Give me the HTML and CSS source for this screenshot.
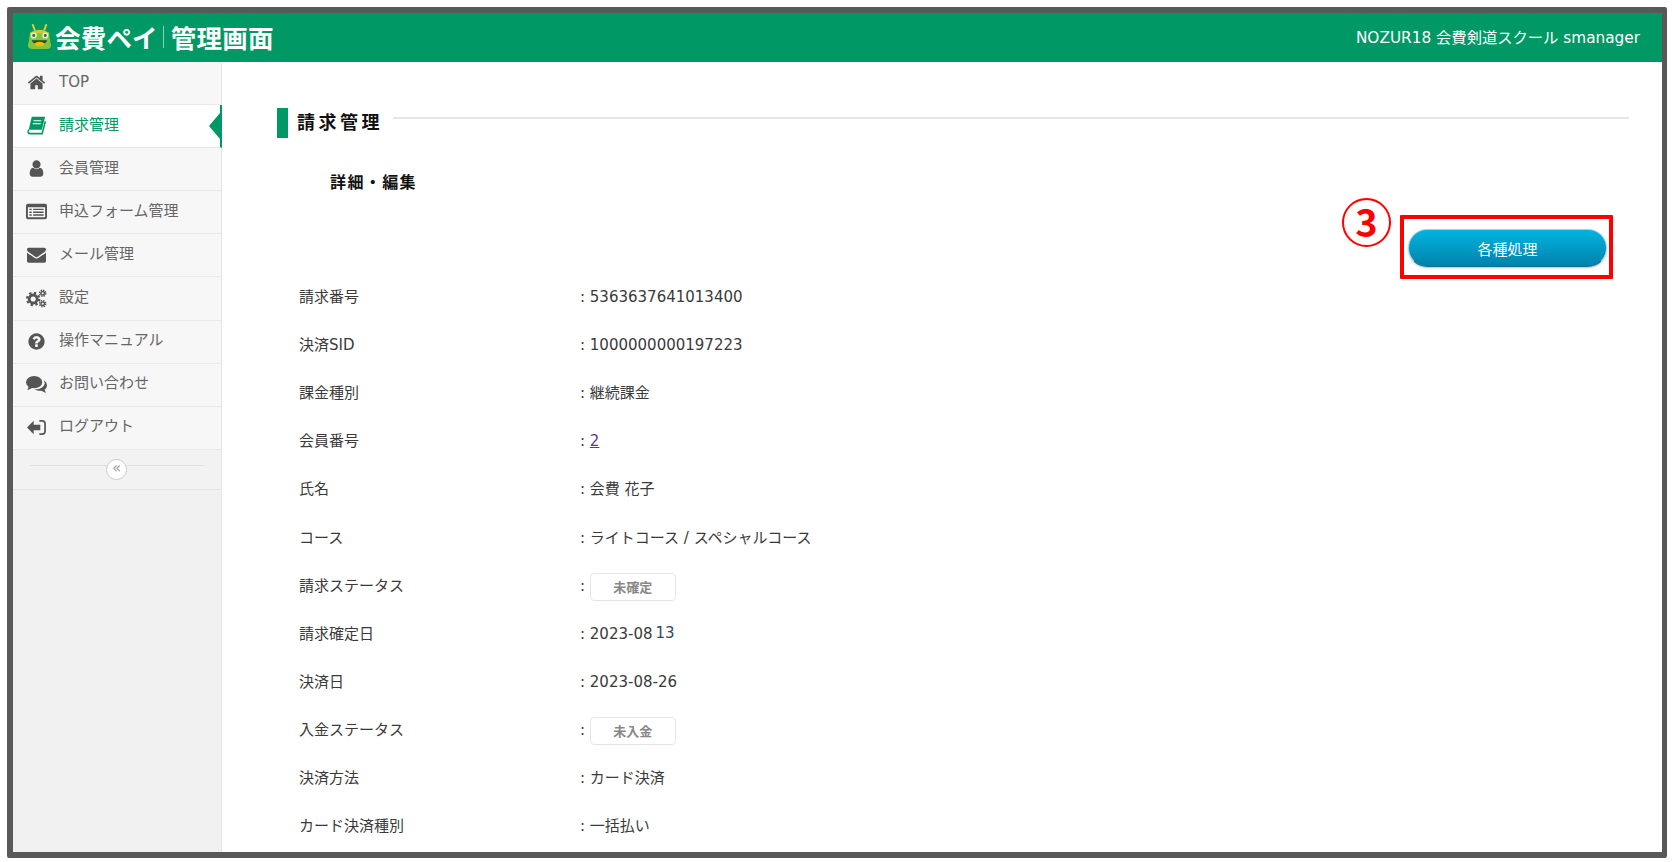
FILE: index.html
```html
<!DOCTYPE html>
<html lang="ja">
<head>
<meta charset="utf-8">
<title>請求管理</title>
<link rel="stylesheet" href="styles.css">
</head>
<body>
<div class="frame">
  <header class="topbar">
    <div class="brand">
      <svg class="frog" viewBox="0 0 26 28" aria-hidden="true">
        <path d="M8 7 6 2M18 7l2-5" stroke="#e8c92e" stroke-width="2" stroke-linecap="round" fill="none"/>
        <path d="M3 10q10-6 20 0v3H3z" fill="#d9c62c"/>
        <path d="M3 12q10-3 20 0l2 11q0 4-5 4H6q-5 0-5-4z" fill="#7ec63e"/>
        <circle cx="7" cy="13" r="3.200" fill="#dff2d0"/><circle cx="19" cy="13" r="3.200" fill="#dff2d0"/>
        <circle cx="7" cy="13" r="1.500" fill="#2b6b3c"/><circle cx="19" cy="13" r="1.500" fill="#2b6b3c"/>
        <path d="M5 18h16q-1 4-8 4t-8-4z" fill="#2a4a2c"/>
        <path d="M8 21q5-3 10 0l-1 3H9z" fill="#f5b800"/>
      </svg>
      <span class="brand-name">会費ペイ</span>
      <span class="brand-sep"></span>
      <span class="brand-name">管理画面</span>
    </div>
    <div class="account">NOZUR18 会費剣道スクール smanager</div>
  </header>
  <div class="body">
    <nav class="side">
      <a class="item"><svg class="ico" viewBox="0 0 1792 1792"><path d="M1472 992v480q0 26-19 45t-45 19h-384v-384h-256v384h-384q-26 0-45-19t-19-45v-480q0-1 .5-3t.5-3l575-474 575 474q1 2 1 6zm223-69l-62 74q-8 9-21 11h-3q-13 0-21-7l-692-577-692 577q-12 8-24 7-13-2-21-11l-62-74q-8-10-7-23.500t11-21.500l719-599q32-26 76-26t76 26l244 204v-195q0-14 9-23t23-9h192q14 0 23 9t9 23v408l219 182q10 8 11 21.500t-7 23.500z"/></svg><span>TOP</span></a>
      <a class="item active"><svg class="ico" viewBox="0 0 22 22"><path d="M5.500 1h15.500l-3.800 15H2z"/><path d="M2.200 16q-1.800 2-.8 3.400.6 1 2.300 1H17.500l3.800-14.400" fill="none" stroke="currentColor" stroke-width="1.800"/><path d="M7.500 5.500h9M6.800 8.800h9" stroke="#fff" stroke-width="1.300"/></svg><span>請求管理</span></a>
      <a class="item"><svg class="ico" viewBox="0 0 1792 1792"><path d="M1536 1399q0 109-62.500 187t-150.500 78h-854q-88 0-150.500-78t-62.500-187q0-85 8.500-160.500t31.500-152 58.500-131 94-89 134.500-34.500q131 128 313 128t313-128q76 0 134.500 34.500t94 89 58.500 131 31.500 152 8.500 160.500zm-256-887q0 159-112.500 271.500t-271.500 112.500-271.500-112.500-112.500-271.500 112.500-271.500 271.500-112.500 271.500 112.500 112.500 271.500z"/></svg><span>会員管理</span></a>
      <a class="item"><svg class="ico" viewBox="0 0 22 18"><path fill-rule="evenodd" d="M2 1h18a2 2 0 0 1 2 2v12a2 2 0 0 1-2 2H2a2 2 0 0 1-2-2V3a2 2 0 0 1 2-2zm0 3.500V15h18V4.500z"/><path d="M3.500 6h2.500v1.500H3.500zM7.500 6h11v1.500h-11zM3.500 9h2.500v1.500H3.500zM7.500 9h11v1.500h-11zM3.500 12h2.500v1.500H3.500zM7.500 12h11v1.500h-11z"/></svg><span>申込フォーム管理</span></a>
      <a class="item"><svg class="ico" viewBox="0 0 1792 1792"><path d="M1792 710v794q0 66-47 113t-113 47h-1472q-66 0-113-47t-47-113v-794q44 49 101 87 362 246 497 345 57 42 92.500 65.500t94.500 48 110 24.500h2q51 0 110-24.500t94.500-48 92.500-65.500q170-123 498-345 57-39 100-87zm0-294q0 79-49 151t-122 123q-376 261-468 325-10 7-42.500 30.500t-54 38-52 32.500-57.500 27-50 9h-2q-23 0-50-9t-57.500-27-52-32.500-54-38-42.500-30.500q-91-64-262-182.500t-205-142.500q-62-42-117-115.500t-55-136.500q0-78 41.500-130t118.500-52h1472q65 0 112.500 47t47.500 113z"/></svg><span>メール管理</span></a>
      <a class="item"><svg class="ico" viewBox="0 0 22 20"><g fill="none" stroke="currentColor"><circle cx="7.500" cy="10.500" r="4.200" stroke-width="3"/><circle cx="7.500" cy="10.500" r="6.400" stroke-width="2.400" stroke-dasharray="2.500 2.520"/><circle cx="17.500" cy="4.500" r="1.900" stroke-width="1.500"/><circle cx="17.500" cy="4.500" r="3.300" stroke-width="1.400" stroke-dasharray="1.500 1.090"/><circle cx="17.500" cy="15.500" r="1.900" stroke-width="1.500"/><circle cx="17.500" cy="15.500" r="3.300" stroke-width="1.400" stroke-dasharray="1.500 1.090"/></g></svg><span>設定</span></a>
      <a class="item"><svg class="ico" viewBox="0 0 1792 1792"><path d="M1024 1376v-192q0-14-9-23t-23-9h-192q-14 0-23 9t-9 23v192q0 14 9 23t23 9h192q14 0 23-9t9-23zm256-672q0-88-55.500-163t-138.500-116-170-41q-243 0-371 213-15 24 8 42l132 100q7 6 19 6 16 0 25-12 53-68 86-92 34-24 86-24 48 0 85.500 26t37.500 59q0 38-20 61t-68 45q-63 28-115.500 86.500t-52.500 125.500v36q0 14 9 23t23 9h192q14 0 23-9t9-23q0-19 21.500-49.500t54.500-49.500q32-18 49-28.500t46-35 44.500-48 28-60.500 12.500-81zm384 192q0 209-103 385.500t-279.500 279.500-385.500 103-385.500-103-279.500-279.500-103-385.500 103-385.500 279.500-279.500 385.500-103 385.500 103 279.500 279.500 103 385.500z"/></svg><span>操作マニュアル</span></a>
      <a class="item"><svg class="ico" viewBox="0 0 22 20"><ellipse cx="8.500" cy="7.500" rx="8.500" ry="6.500"/><path d="M3 11 1.500 16 8 13z"/><path d="M18.500 5.500q3.500 2 3.500 5.500 0 3-2.500 4.500l1.500 3.500-5-2.500q-4 .5-7-1.500 6 0 9-3t.5-6.500z"/></svg><span>お問い合わせ</span></a>
      <a class="item"><svg class="ico" viewBox="0 0 22 20"><path d="M1 10l7-7v4h7v6H8v4z"/><path d="M14 3h3a3 3 0 0 1 3 3v8a3 3 0 0 1-3 3h-3" fill="none" stroke="currentColor" stroke-width="1.800"/></svg><span>ログアウト</span></a>
      <div class="collapse">
        <span class="collapse-line"></span>
        <span class="collapse-btn">«</span>
      </div>
    </nav>
    <main class="main">
      <div class="title-row">
        <span class="title-mark"></span>
        <h1 class="title">請求管理</h1>
        <span class="title-rule"></span>
      </div>
      <h2 class="sub">詳細・編集</h2>
      <div class="actions"><button class="btn">各種処理</button></div>
      <dl class="rows">
        <div class="row"><dt>請求番号</dt><dd>: 5363637641013400</dd></div>
        <div class="row"><dt>決済SID</dt><dd>: 1000000000197223</dd></div>
        <div class="row"><dt>課金種別</dt><dd>: 継続課金</dd></div>
        <div class="row"><dt>会員番号</dt><dd>: <a class="link">2</a></dd></div>
        <div class="row"><dt>氏名</dt><dd>: 会費 花子</dd></div>
        <div class="row"><dt>コース</dt><dd>: ライトコース / スペシャルコース</dd></div>
        <div class="row"><dt>請求ステータス</dt><dd>: <span class="badge">未確定</span></dd></div>
        <div class="row"><dt>請求確定日</dt><dd>: 2023-08<span class="patch">13</span></dd></div>
        <div class="row"><dt>決済日</dt><dd>: 2023-08-26</dd></div>
        <div class="row"><dt>入金ステータス</dt><dd>: <span class="badge">未入金</span></dd></div>
        <div class="row"><dt>決済方法</dt><dd>: カード決済</dd></div>
        <div class="row"><dt>カード決済種別</dt><dd>: 一括払い</dd></div>
      </dl>
    </main>
  </div>
  <div class="mark-box"></div>
  <div class="mark-num">3</div>
</div>
</body>
</html>
```
FILE: styles.css
```css
* { box-sizing: border-box; }
html, body { margin: 0; height: 100%; overflow: hidden; background: #fff; }
body {
  font-family: "DejaVu Sans", "Noto Sans CJK JP", sans-serif;
  font-size: 15px;
  color: #3a3a3a;
}
.frame {
  position: relative;
  margin: 7px 0 0 7px;
  width: 1660px;
  height: 851px;
  border: solid #595959;
  border-width: 6px 5px 6px 6px;
  border-radius: 2px;
  overflow: hidden;
  display: flex;
  flex-direction: column;
}
.topbar {
  height: 49px;
  flex: none;
  background: #009966;
  color: #fff;
  display: flex;
  align-items: center;
  justify-content: space-between;
  padding: 0 22px 0 14px;
}
.brand { display: flex; align-items: center; margin-bottom: 2px; }
.frog { width: 25px; height: 27px; margin-right: 3px; }
.brand-name {
  font-family: "Noto Sans CJK JP", sans-serif;
  font-size: 25.500px;
  font-weight: 700;
  letter-spacing: .2px;
  line-height: 30px;
}
.brand-sep { width: 1px; height: 22px; background: #8fd0b6; margin: 0 7px 0 5px; }
.account { font-size: 15.300px; line-height: 22px; }
.body { flex: 1; display: flex; min-height: 0; }
.side {
  position: relative;
  width: 209px;
  flex: none;
  background: #f0f0f0;
  border-right: 1px solid #e6e6e6;
}
.item {
  position: relative;
  height: 43.100px;
  display: flex;
  align-items: center;
  padding-left: 13px;
  background: #f7f7f7;
  border-bottom: 1px solid #e9e9e9;
  color: #666;
  line-height: 20px;
}
.item span { margin: 0 0 3px 12px; }
.ico { width: 21px; height: 19px; fill: currentColor; flex: none; color: #555; margin-bottom: 1px; }
.item.active { background: #fff; color: #009966; margin-right: -1px; border-right: 2px solid #009966; }
.item.active .ico { color: #009966; }
.item.active::after {
  content: "";
  position: absolute;
  right: 0;
  top: 8px;
  border: solid transparent;
  border-width: 13px 11px 13px 0;
  border-right-color: #009966;
}
.collapse {
  position: relative;
  height: 40px;
  background: #f2f2f2;
  border-bottom: 1px solid #e3e3e3;
  padding: 15px 17px 0;
}
.collapse-line { display: block; height: 1px; background: #e0e0e0; }
.collapse-btn {
  position: absolute;
  left: 93px;
  top: 9px;
  width: 21px;
  height: 21px;
  border: 1px solid #ccc;
  border-radius: 50%;
  background: #fff;
  color: #999;
  font-size: 15px;
  line-height: 16px;
  text-align: center;
}
.main { flex: 1; padding: 46px 33px 0 55px; min-width: 0; overflow: hidden; }
.title-row { display: flex; align-items: flex-start; height: 30px; }
.title-mark { width: 11px; height: 30px; background: #009966; flex: none; }
.title {
  margin: 0 0 0 9px;
  font-family: "Noto Sans CJK JP", sans-serif;
  font-size: 18px;
  font-weight: 700;
  letter-spacing: 3.500px;
  line-height: 27px;
  color: #111;
  white-space: nowrap;
}
.title-rule { flex: 1; height: 2px; background: #e5e5e5; margin: 9px 0 0 10px; }
.sub {
  margin: 31px 0 0 53px;
  font-family: "Noto Sans CJK JP", sans-serif;
  font-size: 16px;
  font-weight: 700;
  letter-spacing: 1.400px;
  line-height: 24px;
  color: #111;
}
.actions { display: flex; justify-content: flex-end; padding: 36px 22px 0 0; height: 74px; }
.btn {
  width: 199px;
  height: 38px;
  border: 1px solid #9fd4e4;
  border-bottom-color: #0a7396;
  border-radius: 19px;
  background: linear-gradient(#00b4e0, #0082aa);
  color: #fff;
  font: inherit;
  font-size: 15px;
  box-shadow: 0 1px 2px rgba(0,0,0,.25);
  padding: 0;
}
.rows { margin: 6px 0 0 22px; }
.row { display: flex; align-items: center; height: 48.100px; margin: 0; line-height: 24px; }
.row dt { width: 281px; flex: none; }
.row dd { margin: 0; white-space: pre; }
.link { color: #5b3c94; text-decoration: underline; }
.badge {
  display: inline-block;
  vertical-align: middle;
  width: 86px;
  height: 28px;
  border: 1px solid #e5e5e5;
  border-radius: 4px;
  color: #888;
  font-family: "Noto Sans CJK JP", sans-serif;
  font-size: 13px;
  font-weight: 700;
  line-height: 26px;
  text-align: center;
  margin: 2px 0 0 0;
}
.patch { color: #33475f; margin-left: 3px; position: relative; top: -1px; }
.mark-box {
  position: absolute;
  left: 1387px;
  top: 202px;
  width: 213px;
  height: 64px;
  border: 4px solid #f00;
  border-radius: 1px;
}
.mark-num {
  position: absolute;
  left: 1329px;
  top: 185px;
  width: 49px;
  height: 49px;
  border: 2.500px solid #f00;
  border-radius: 50%;
  color: #f00;
  font-family: "Noto Sans CJK JP", sans-serif;
  font-size: 38px;
  font-weight: 700;
  line-height: 41px;
  text-align: center;
}
```
